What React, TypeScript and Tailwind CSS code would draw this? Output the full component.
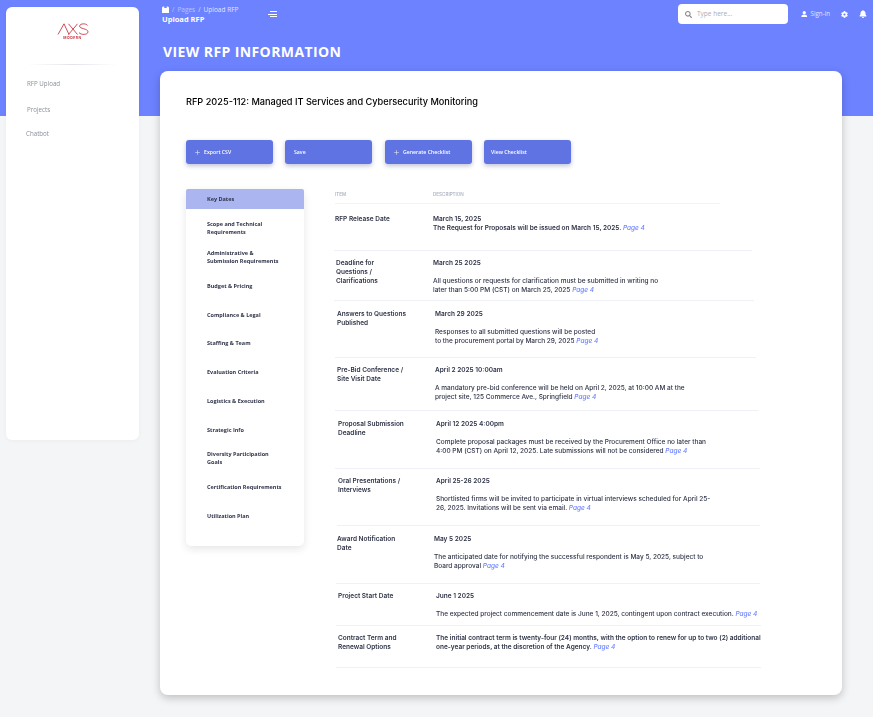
import React from 'react';
import { Plus } from 'lucide-react';
import { FaBell, FaCog, FaSearch, FaUser } from 'react-icons/fa';

type Row = {
    item: string[];
    date?: string;
    desc: string[];
    gap?: boolean;
    strong?: boolean;
    rowClass: string;
    itemClass: string;
};

const rows: Row[] = [
    {
        item: ['RFP Release Date'],
        date: 'March 15, 2025',
        desc: ['The Request for Proposals will be issued on March 15, 2025. '],
        strong: true,
        rowClass: 'h-[47px] pt-[11px] ml-[-1px] w-[418px]',
        itemClass: 'pl-[1px] w-[99px]',
    },
    {
        item: ['Deadline for', 'Questions /', 'Clarifications'],
        date: 'March 25 2025',
        desc: ['All questions or requests for clarification must be submitted in writing no', 'later than 5:00 PM (CST) on March 25, 2025 '],
        gap: true,
        rowClass: 'h-[50px] pt-[8px] ml-[-1px] w-[420px]',
        itemClass: 'pl-[2px] w-[99px]',
    },
    {
        item: ['Answers to Questions', 'Published'],
        date: 'March 29 2025',
        desc: ['Responses to all submitted questions will be posted', 'to the procurement portal by March 29, 2025 '],
        gap: true,
        rowClass: 'h-[57px] pt-[9px] w-[421px]',
        itemClass: 'pl-[2px] w-[100px]',
    },
    {
        item: ['Pre-Bid Conference /', 'Site Visit Date'],
        date: 'April 2 2025 10:00am',
        desc: ['A mandatory pre-bid conference will be held on April 2, 2025, at 10:00 AM at the', 'project site, 125 Commerce Ave., Springfield '],
        gap: true,
        rowClass: 'h-[53px] pt-[8px] w-[423px]',
        itemClass: 'pl-[2px] w-[100px]',
    },
    {
        item: ['Proposal Submission', 'Deadline'],
        date: 'April 12 2025 4:00pm',
        desc: ['Complete proposal packages must be received by the Procurement Office no later than', '4:00 PM (CST) on April 12, 2025. Late submissions will not be considered '],
        gap: true,
        rowClass: 'h-[58px] pt-[9px] w-[425px]',
        itemClass: 'pl-[3px] w-[101px]',
    },
    {
        item: ['Oral Presentations /', 'Interviews'],
        date: 'April 25-26 2025',
        desc: ['Shortlisted firms will be invited to participate in virtual interviews scheduled for April 25-', '26, 2025. Invitations will be sent via email. '],
        gap: true,
        rowClass: 'h-[57px] pt-[8px] ml-[2px] w-[423px]',
        itemClass: 'pl-[1px] w-[99px]',
    },
    {
        item: ['Award Notification', 'Date'],
        date: 'May 5 2025',
        desc: ['The anticipated date for notifying the successful respondent is May 5, 2025, subject to', 'Board approval '],
        gap: true,
        rowClass: 'h-[58px] pt-[9px] ml-[1px] w-[424px]',
        itemClass: 'pl-[1px] w-[98px]',
    },
    {
        item: ['Project Start Date'],
        date: 'June 1 2025',
        desc: ['The expected project commencement date is June 1, 2025, contingent upon contract execution. '],
        gap: true,
        rowClass: 'h-[42px] pt-[8px] ml-[1px] w-[425px]',
        itemClass: 'pl-[2px] w-[100px]',
    },
    {
        item: ['Contract Term and', 'Renewal Options'],
        desc: ['The initial contract term is twenty-four (24) months, with the option to renew for up to two (2) additional', 'one-year periods, at the discretion of the Agency. '],
        strong: true,
        rowClass: 'h-[42px] pt-[8px] ml-[1px] w-[425px]',
        itemClass: 'pl-[2px] w-[100px]',
    },
];

const tabs = [
    { label: ['Key Dates'], cls: 'h-[20px] bg-[#abb6f0] rounded-t-[2px]' },
    { label: ['Scope and Technical', 'Requirements'], cls: 'h-[30px] mt-[4px]' },
    { label: ['Administrative &', 'Submission Requirements'], cls: 'h-[24px] mt-[2px]' },
    { label: ['Budget & Pricing'], cls: 'h-[12px] mt-[11px]' },
    { label: ['Compliance & Legal'], cls: 'h-[12px] mt-[17px]' },
    { label: ['Staffing & Team'], cls: 'h-[12px] mt-[16px]' },
    { label: ['Evaluation Criteria'], cls: 'h-[12px] mt-[17px]' },
    { label: ['Logistics & Execution'], cls: 'h-[12px] mt-[17px]' },
    { label: ['Strategic Info'], cls: 'h-[12px] mt-[17px]' },
    { label: ['Diversity Participation', 'Goals'], cls: 'h-[20px] mt-[12px]' },
    { label: ['Certification Requirements'], cls: 'h-[12px] mt-[13px]' },
    { label: ['Utilization Plan'], cls: 'h-[12px] mt-[17px]' },
];

function ActionButton({ label, plus, cls }: { label: string; plus?: boolean; cls: string }) {
    return (
        <button className={`h-[24px] w-[87px] flex items-center rounded-[3px] bg-[#5f73e3] pt-[1px] text-white text-[5.2px] font-semibold shadow-[0_2px_4px_rgba(50,60,120,0.3)] font-['Open_Sans',sans-serif] ${cls}`}>
            {plus && <Plus size={7} strokeWidth={1.6} className="mr-[3px]" />}
            {label}
        </button>
    );
}

export default function App() {
    return (
        <div className="h-[717px] w-[873px] overflow-hidden flex bg-[linear-gradient(#6c82ff_116px,#f4f5f7_116px)] font-['Inter',sans-serif]">
            {/* sidebar */}
            <aside className="ml-[6px] mt-[7px] h-[433px] w-[133px] shrink-0 rounded-[6px] bg-white shadow-[0_1px_4px_rgba(0,0,0,0.04)] will-change-transform">
                <div className="mt-[16px] flex flex-col items-center">
                    <svg width="32" height="12" viewBox="0 0 32 12" fill="none" stroke="#c2202f" strokeWidth="0.8">
                        <path d="M1 11.5 L7 0.8 L12 11.5" />
                        <path d="M11.5 0.8 L20.5 11.5 M20.5 0.8 L11.5 11.5" />
                        <path d="M30.5 2.4 C29 0.2 23 0.3 22.6 3 C22.2 6 31 5.4 31 8.8 C31 12 24 12.2 22 9.6" />
                    </svg>
                    <span className="text-[3.5px] leading-[4px] mt-[1px] font-semibold tracking-[0.5px] text-[#c2202f]">MODERN</span>
                </div>
                <div className="mx-[22px] mt-[24px] h-px bg-[linear-gradient(90deg,transparent,#e3e4e8,transparent)]" />
                <nav className="text-[6.2px] text-[#8a8f99] font-['Open_Sans',sans-serif]">
                    <p className="ml-[21px] mt-[14px] leading-[9px]">RFP Upload</p>
                    <p className="ml-[21px] mt-[17px] leading-[9px]">Projects</p>
                    <p className="ml-[20px] mt-[15px] leading-[9px]">Chatbot</p>
                </nav>
            </aside>

            {/* right side */}
            <div className="ml-[21px] flex-1 min-w-0">
                <header className="flex items-start h-[71px] text-white font-['Open_Sans',sans-serif]">
                    <div className="ml-[2px] mt-[5px] w-[106px]">
                        <div className="flex items-center gap-[3px] text-[6.5px] leading-[9px]">
                            <svg width="7" height="7" viewBox="0 0 7 7" fill="white"><path d="M0 1.5 L1 0.5 H2.3 V2 H4.7 V0.5 H6 L7 1.5 V7 H0 Z" /></svg>
                            <span className="opacity-50">/</span>
                            <span className="opacity-50">Pages</span>
                            <span className="opacity-70">/</span>
                            <span className="opacity-80">Upload RFP</span>
                        </div>
                        <p className="text-[7.5px] font-bold leading-[10px]">Upload RFP</p>
                    </div>
                    <div className="mt-[11px] flex flex-col items-end gap-[1.5px] w-[9px]">
                        <span className="h-px w-[7px] bg-white" />
                        <span className="h-px w-[9px] bg-white" />
                        <span className="h-px w-[7px] bg-white" />
                    </div>
                    <div className="ml-auto mt-[4px] mr-[6px] flex items-center">
                        <div className="flex h-[20px] w-[110px] items-center rounded-[4px] bg-white pl-[7px] text-[6.5px] text-[#a9adb8]">
                            <FaSearch size={7} className="text-[#8a8a8a] mr-[5px]" />
                            Type here...
                        </div>
                        <FaUser size={6.5} className="ml-[13px]" />
                        <span className="ml-[3px] text-[6.2px] opacity-80">Sign-in</span>
                        <FaCog size={7} className="ml-[11px]" />
                        <FaBell size={8} className="ml-[11px]" />
                    </div>
                </header>

                <h1 className="ml-[3px] mt-[-29px] h-[29px] text-[14px] leading-[20px] font-bold tracking-[0.4px] text-white font-['Open_Sans',sans-serif]">
                    VIEW RFP INFORMATION
                </h1>

                {/* main card */}
                <main className="h-[624px] w-[682px] rounded-[8px] bg-white shadow-[0_3px_8px_rgba(0,0,0,0.22)] will-change-transform">
                    <h2 className="ml-[26px] pt-[24px] text-[9.2px] leading-[13px] font-medium text-black">
                        RFP 2025-112: Managed IT Services and Cybersecurity Monitoring
                    </h2>

                    <div className="ml-[26px] mt-[32px] flex">
                        <ActionButton label="Export CSV" plus cls="pl-[8px]" />
                        <ActionButton label="Save" cls="ml-[12px] pl-[9px]" />
                        <ActionButton label="Generate Checklist" plus cls="ml-[13px] pl-[8px]" />
                        <ActionButton label="View Checklist" cls="ml-[12px] pl-[7px]" />
                    </div>

                    <div className="mt-[25px] flex">
                        {/* tab list */}
                        <div className="ml-[26px] h-[357px] w-[118px] shrink-0 rounded-[5px] bg-white shadow-[0_3px_8px_rgba(0,0,0,0.1)]">
                            {tabs.map((t) => (
                                <div key={t.label[0]} className={`flex items-center pl-[21px] text-[5.5px] font-bold leading-[8px] text-[#30344a] font-['Open_Sans',sans-serif] ${t.cls}`}>
                                    <span>
                                        {t.label.map((l) => (
                                            <span key={l} className="block whitespace-nowrap">{l}</span>
                                        ))}
                                    </span>
                                </div>
                            ))}
                        </div>

                        {/* table */}
                        <div className="ml-[31px] flex-1 text-[6.5px] font-medium leading-[9px] text-[#2f3447]">
                            <div className="flex h-[15px] w-[385px] border-b border-[#f2f3f6] pt-[1px] text-[4.6px] leading-[9px] text-[#a5acba]">
                                <span className="w-[98px]">ITEM</span>
                                <span>DESCRIPTION</span>
                            </div>
                            {rows.map((r) => (
                                <div key={r.item[0]} className={`flex border-b border-[#f0f1f6] ${r.rowClass}`}>
                                    <div className={`shrink-0 font-semibold ${r.itemClass}`}>
                                        {r.item.map((l) => (
                                            <span key={l} className="block whitespace-nowrap">{l}</span>
                                        ))}
                                    </div>
                                    <div className="whitespace-nowrap">
                                        {r.date && <p className="font-semibold">{r.date}</p>}
                                        {r.gap && <div className="h-[9px]" />}
                                        {r.desc.map((l, i) => (
                                            <p key={l} className={r.strong ? 'font-semibold' : ''}>
                                                {l}
                                                {i === r.desc.length - 1 && <em className="font-medium text-[#6c82ff]">Page 4</em>}
                                            </p>
                                        ))}
                                    </div>
                                </div>
                            ))}
                        </div>
                    </div>
                </main>
            </div>
        </div>
    );
}
